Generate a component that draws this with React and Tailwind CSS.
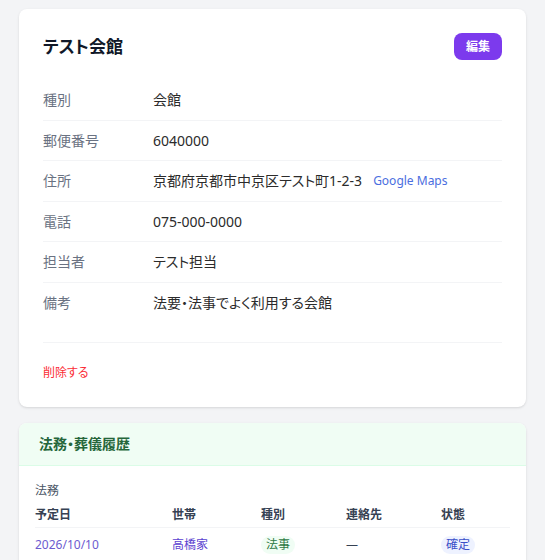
import React from "react";

const details = [
  { label: "種別", value: "会館" },
  { label: "郵便番号", value: "6040000" },
  { label: "住所", value: "京都府京都市中京区テスト町1-2-3", map: true },
  { label: "電話", value: "075-000-0000" },
  { label: "担当者", value: "テスト担当" },
  { label: "備考", value: "法要・法事でよく利用する会館" },
];

const services = [
  {
    date: "2026/10/10",
    household: "高橋家",
    kind: "法事",
    contact: "—",
    status: "確定",
  },
];

export default function App() {
  return (
    <div className="min-h-screen bg-gray-100 px-[19px] pt-[9px] pb-6 font-['Noto_Sans','Noto_Sans_CJK_JP',sans-serif] [font-feature-settings:'palt'] text-gray-800">
      {/* Venue detail card */}
      <div className="bg-white rounded-lg shadow-sm p-6">
        <div className="flex items-center justify-between mb-5">
          <h1 className="text-[17px] leading-6 font-bold text-gray-900">テスト会館</h1>
          <button className="block h-[27px] px-3 rounded-lg bg-[#7c3aed] text-white text-xs font-bold">
            編集
          </button>
        </div>

        <div>
          {details.map((row, i) => (
            <div
              key={row.label}
              className={`flex items-center py-[10px] text-sm leading-[19.5px] ${
                i < details.length - 1 ? "border-b border-gray-100" : ""
              }`}
            >
              <div className="w-[110px] shrink-0 text-gray-500">{row.label}</div>
              <div className="flex items-center text-[#2b2b2b]">
                {row.value}
                {row.map && (
                  <a href="#" className="ml-[11px] text-xs text-[#4a6ee0]">
                    Google Maps
                  </a>
                )}
              </div>
            </div>
          ))}
        </div>

        <div className="mt-5 border-t border-gray-100 pt-5">
          <button className="block text-xs leading-5 text-red-500">削除する</button>
        </div>
      </div>

      {/* Service history card */}
      <div className="mt-4 bg-white rounded-lg shadow-sm overflow-hidden">
        <div className="bg-green-50 border-b border-green-100 px-5 py-[11px]">
          <h2 className="text-sm leading-5 font-bold text-[#25663a]">法務・葬儀履歴</h2>
        </div>
        <div className="px-4 pt-[17px] pb-2">
          <div className="text-xs leading-4 text-gray-600 mb-1">法務</div>
          <table className="w-full table-fixed text-xs text-left">
            <colgroup>
              <col className="w-[137px]" />
              <col className="w-[89px]" />
              <col className="w-[85px]" />
              <col className="w-[95px]" />
              <col />
            </colgroup>
            <thead>
              <tr className="border-b border-gray-100">
                <th className="py-1 leading-4 font-semibold text-gray-700">予定日</th>
                <th className="py-1 leading-4 font-semibold text-gray-700">世帯</th>
                <th className="py-1 leading-4 font-semibold text-gray-700">種別</th>
                <th className="py-1 leading-4 font-semibold text-gray-700">連絡先</th>
                <th className="py-1 leading-4 font-semibold text-gray-700">状態</th>
              </tr>
            </thead>
            <tbody>
              {services.map((s) => (
                <tr key={s.date}>
                  <td className="py-2 leading-4 text-[#6d5bd0]">{s.date}</td>
                  <td className="py-2 leading-4 text-[#5b3fd0]">{s.household}</td>
                  <td className="py-2 leading-4">
                    <span className="inline-block rounded-full bg-green-50 px-[5px] py-px text-[#2f7a45]">
                      {s.kind}
                    </span>
                  </td>
                  <td className="py-2 leading-4 text-gray-700">{s.contact}</td>
                  <td className="py-2 leading-4">
                    <span className="inline-block rounded-full bg-indigo-50 px-[5px] py-px text-[#3b4fc8]">
                      {s.status}
                    </span>
                  </td>
                </tr>
              ))}
            </tbody>
          </table>
        </div>
      </div>
    </div>
  );
}
